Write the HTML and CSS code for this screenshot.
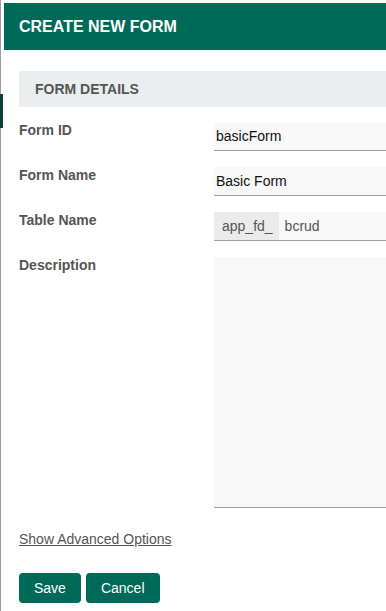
FILE: index.html
```html
<!DOCTYPE html>
<html lang="en">

<head>
    <meta charset="UTF-8">
    <meta name="viewport" content="width=device-width, initial-scale=1.0">
    <title>Create New Form</title>

    <link rel="stylesheet" href="styles.css">
</head>

<body>
    <div class="page-edge">
        <div class="edge-line edge-top"></div>
        <div class="edge-block"></div>
        <div class="edge-line edge-rest"></div>
    </div>

    <div class="modal">
        <div class="modal-header">CREATE NEW FORM</div>

        <div class="modal-body">
            <div class="section-title">FORM DETAILS</div>

            <div class="form-row">
                <label class="form-label" for="formId">Form ID</label>
                <input class="form-input" id="formId" type="text" value="basicForm">
            </div>
            <div class="form-row">
                <label class="form-label" for="formName">Form Name</label>
                <input class="form-input" id="formName" type="text" value="Basic Form">
            </div>
            <div class="form-row">
                <label class="form-label" for="tableName">Table Name</label>
                <div class="input-group">
                    <span class="input-prefix">app_fd_</span>
                    <input class="form-input group-input" id="tableName" type="text" value="bcrud">
                </div>
            </div>
            <div class="form-row">
                <label class="form-label" for="description">Description</label>
                <textarea class="form-textarea" id="description"></textarea>
            </div>

            <a class="advanced-link" href="#">Show Advanced Options</a>

            <div class="button-row">
                <button class="btn">Save</button>
                <button class="btn">Cancel</button>
            </div>
        </div>
    </div>
</body>

</html>
```

FILE: styles.css
```css
html,
body {
    margin: 0;
    height: 611px;
    overflow: hidden;
}

body {
    font-family: "Liberation Sans", Arial, sans-serif;
    font-size: 14px;
    background-color: white;
    display: flex;
}

/* the page behind the dialog */
.page-edge {
    width: 4px;
    flex-shrink: 0;
    display: flex;
    flex-direction: column;
}

.edge-line {
    width: 1px;
    background-color: #9c9c9c;
}

.edge-top {
    height: 94px;
}

.edge-block {
    width: 3px;
    height: 34px;
    background-color: #0b3f35;
}

.edge-rest {
    flex: 1;
}

.modal {
    flex: 1;
    margin-top: 3px;
    min-width: 0;
    overflow: hidden;
}

.modal-header {
    background-color: #006a59;
    color: white;
    font-size: 16px;
    font-weight: bold;
    height: 47px;
    line-height: 47px;
    padding-left: 15px;
}

.modal-body {
    padding: 21px 0 0 15px;
}

.section-title {
    background-color: #ebeeef;
    color: #555;
    font-size: 14px;
    font-weight: bold;
    height: 36px;
    line-height: 36px;
    padding-left: 16px;
    margin-bottom: 15px;
}

.form-row {
    display: flex;
    align-items: flex-start;
    margin-bottom: 16px;
}

.form-label {
    width: 195px;
    flex-shrink: 0;
    color: #555;
    font-weight: bold;
    line-height: 16px;
}

.form-input {
    flex: 1;
    min-width: 0;
    width: 0;
    height: 29px;
    box-sizing: border-box;
    border: none;
    border-bottom: 1px solid #a0a0a0;
    background-color: #f8f8f8;
    font-family: "Liberation Sans", Arial, sans-serif;
    font-size: 14px;
    color: #111;
    padding: 0 2px;
    margin: 0;
}

.input-group {
    flex: 1;
    min-width: 0;
    display: flex;
    border-bottom: 1px solid #a0a0a0;
}

.input-prefix {
    background-color: #ebebeb;
    color: #555;
    height: 28px;
    line-height: 28px;
    padding: 0 6px 0 8px;
}

.group-input {
    height: 28px;
    border-bottom: none;
    padding-left: 6px;
    color: #555;
}

.form-textarea {
    flex: 1;
    min-width: 0;
    width: 0;
    height: 251px;
    box-sizing: border-box;
    border: none;
    border-bottom: 1px solid #a0a0a0;
    background-color: #f8f8f8;
    resize: none;
    margin: 0;
}

.advanced-link {
    display: inline-block;
    color: #555;
    line-height: 16px;
    margin-top: 7px;
}

.button-row {
    display: flex;
    gap: 5px;
    margin-top: 26px;
}

.btn {
    background-color: #006a59;
    color: white;
    font-family: "Liberation Sans", Arial, sans-serif;
    font-size: 14px;
    height: 30px;
    padding: 0 15px;
    border: none;
    border-radius: 4px;
    cursor: pointer;
}
```
